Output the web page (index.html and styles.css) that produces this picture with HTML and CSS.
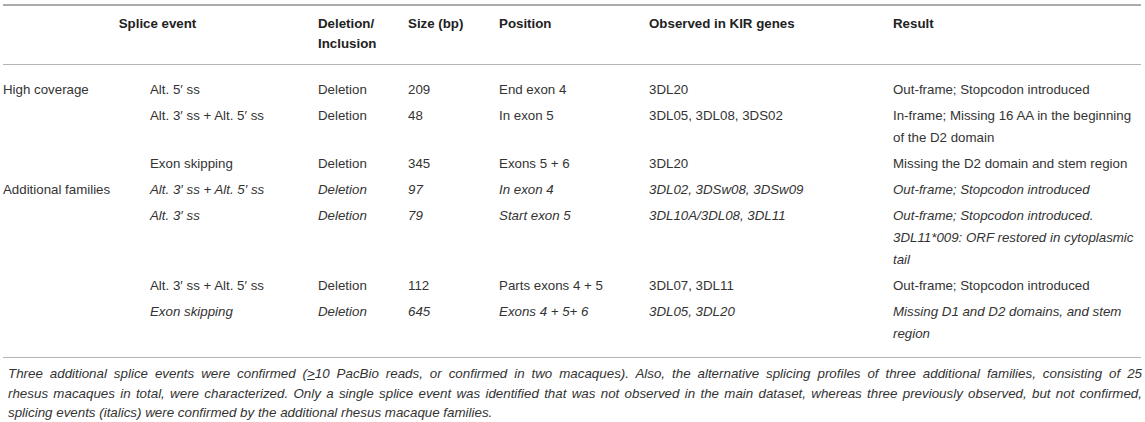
FILE: index.html
```html
<!DOCTYPE html>
<html lang="en">
<head>
    <meta charset="UTF-8">
    <title>Splice events</title>
    <link rel="stylesheet" href="styles.css">
</head>
<body>

<div class="wrap">
    <table class="splice">
        <colgroup>
            <col class="c-group">
            <col class="c-event">
            <col class="c-del">
            <col class="c-size">
            <col class="c-pos">
            <col class="c-genes">
            <col class="c-result">
        </colgroup>
        <thead>
            <tr>
                <th colspan="2" class="center">Splice event</th>
                <th>Deletion/<br>Inclusion</th>
                <th>Size (bp)</th>
                <th>Position</th>
                <th>Observed in KIR genes</th>
                <th>Result</th>
            </tr>
        </thead>
        <tbody>
            <tr class="first">
                <td>High coverage</td>
                <td>Alt. 5′ ss</td>
                <td>Deletion</td>
                <td>209</td>
                <td>End exon 4</td>
                <td>3DL20</td>
                <td>Out-frame; Stopcodon introduced</td>
            </tr>
            <tr>
                <td></td>
                <td>Alt. 3′ ss + Alt. 5′ ss</td>
                <td>Deletion</td>
                <td>48</td>
                <td>In exon 5</td>
                <td>3DL05, 3DL08, 3DS02</td>
                <td>In-frame; Missing 16 AA in the beginning of the D2 domain</td>
            </tr>
            <tr>
                <td></td>
                <td>Exon skipping</td>
                <td>Deletion</td>
                <td>345</td>
                <td>Exons 5 + 6</td>
                <td>3DL20</td>
                <td>Missing the D2 domain and stem region</td>
            </tr>
            <!-- italics: not confirmed in the main dataset -->
            <tr class="ital">
                <td>Additional families</td>
                <td>Alt. 3′ ss + Alt. 5′ ss</td>
                <td>Deletion</td>
                <td>97</td>
                <td>In exon 4</td>
                <td>3DL02, 3DSw08, 3DSw09</td>
                <td>Out-frame; Stopcodon introduced</td>
            </tr>
            <tr class="ital">
                <td></td>
                <td>Alt. 3′ ss</td>
                <td>Deletion</td>
                <td>79</td>
                <td>Start exon 5</td>
                <td>3DL10A/3DL08, 3DL11</td>
                <td>Out-frame; Stopcodon introduced.<br>3DL11*009: ORF restored in cytoplasmic tail</td>
            </tr>
            <tr>
                <td></td>
                <td>Alt. 3′ ss + Alt. 5′ ss</td>
                <td>Deletion</td>
                <td>112</td>
                <td>Parts exons 4 + 5</td>
                <td>3DL07, 3DL11</td>
                <td>Out-frame; Stopcodon introduced</td>
            </tr>
            <tr class="ital last">
                <td></td>
                <td>Exon skipping</td>
                <td>Deletion</td>
                <td>645</td>
                <td>Exons 4 + 5+ 6</td>
                <td>3DL05, 3DL20</td>
                <td>Missing D1 and D2 domains, and stem region</td>
            </tr>
        </tbody>
    </table>

    <p class="footnote">
        <span class="line full">Three additional splice events were confirmed (<u>&gt;</u>10 PacBio reads, or confirmed in two macaques). Also, the alternative splicing profiles of three additional families, consisting of 25</span>
        <span class="line full">rhesus macaques in total, were characterized. Only a single splice event was identified that was not observed in the main dataset, whereas three previously observed, but not confirmed,</span>
        <span class="line">splicing events (italics) were confirmed by the additional rhesus macaque families.</span>
    </p>
</div>

</body>
</html>
```

FILE: styles.css
```css
/* base */
body {
    margin: 0;
    padding: 0;
    background: #fff;
    color: #333;
    font-family: 'Liberation Sans', Arial, sans-serif;
}

.wrap {
    padding: 4px 4px 0 3px;
}

.splice {
    width: 1138px;
    border-collapse: collapse;
    table-layout: fixed;
    font-size: 13.3px;
    line-height: 22px;
}

.c-group  { width: 147px; }
.c-event  { width: 168px; }
.c-del    { width: 90px; }
.c-size   { width: 91px; }
.c-pos    { width: 150px; }
.c-genes  { width: 244px; }
.c-result { width: 248px; }

.splice thead tr {
    border-top: 2px solid #aaa;
    border-bottom: 1px solid #b5b5b5;
}

.splice th {
    text-align: left;
    vertical-align: top;
    font-weight: bold;
    color: #222;
    line-height: 20px;
    padding: 8px 6px 10px 0;
}

.splice th.center {
    text-align: center;
}

.splice td {
    vertical-align: top;
    padding: 2px 6px 2px 0;
}

.splice tr.first td {
    padding-top: 14px;
}

.splice tr.last td {
    padding-bottom: 12px;
}

.splice tr.ital td + td {
    font-style: italic;
}

.splice tbody tr.last {
    border-bottom: 1px solid #b5b5b5;
}

/* footnote, broken as in the source */
.footnote {
    width: 1134px;
    margin: 6px 0 0;
    padding-left: 5px;
    font-size: 13.35px;
    line-height: 19.5px;
    font-style: italic;
    color: #333;
}

.footnote .line {
    display: block;
    white-space: nowrap;
}

.footnote .line.full {
    text-align: justify;
    text-align-last: justify;
}

.footnote u {
    text-decoration-thickness: 1px;
    text-underline-offset: 1px;
}
```
